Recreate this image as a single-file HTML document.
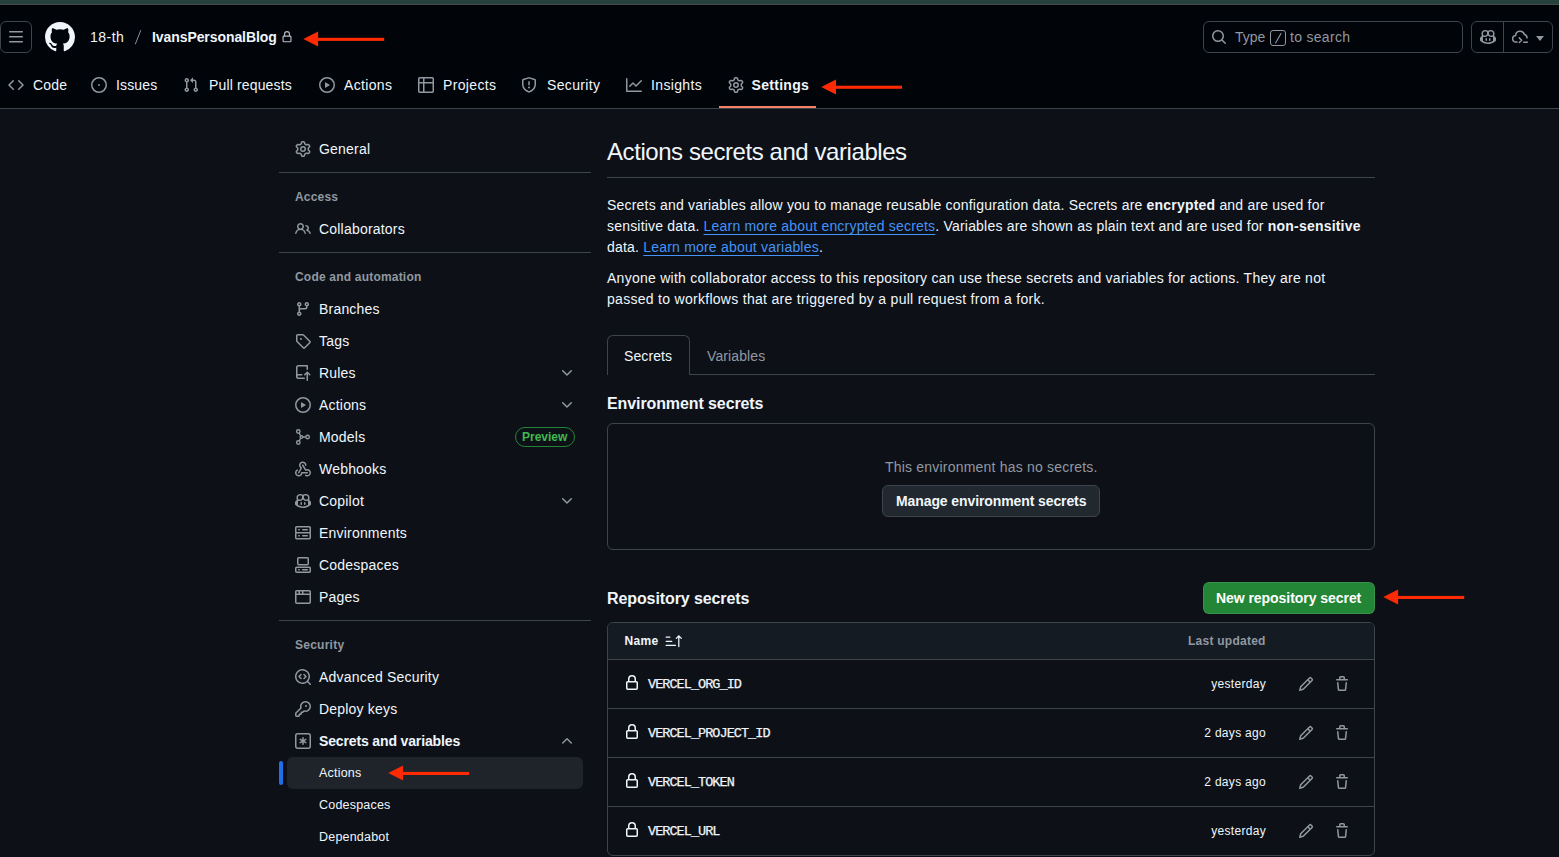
<!DOCTYPE html>
<html><head><meta charset="utf-8">
<style>
*{box-sizing:border-box;margin:0;padding:0}
html,body{width:1559px;height:857px;overflow:hidden;background:#0d1117;font-family:"Liberation Sans",sans-serif;color:#f0f6fc;font-size:14px}
.abs{position:absolute;display:block}
.t{position:absolute;white-space:nowrap}
.box{position:absolute}
.link{color:#4493f8;text-decoration:underline;text-underline-offset:3px}
.mono{font-family:"Liberation Mono",monospace}
b{font-weight:700}
</style></head><body>

<div class="box" style="left:0;top:0;width:1559px;height:4px;background:#27413c"></div><div class="box" style="left:0;top:4px;width:1559px;height:1px;background:#454b4b"></div>
<div class="box" style="left:0;top:5px;width:1559px;height:104px;background:#010409;border-bottom:1px solid #3d444d"></div>
<div class="box" style="left:0;top:21px;width:32px;height:32px;border:1px solid #3d444d;border-radius:6px"></div>
<svg class="abs" style="left:8px;top:29px" width="16" height="16" viewBox="0 0 16 16" fill="#9198a1"><path d="M1 2.75A.75.75 0 0 1 1.75 2h12.5a.75.75 0 0 1 0 1.5H1.75A.75.75 0 0 1 1 2.75Zm0 5A.75.75 0 0 1 1.75 7h12.5a.75.75 0 0 1 0 1.5H1.75A.75.75 0 0 1 1 7.75ZM1.75 12h12.5a.75.75 0 0 1 0 1.5H1.75a.75.75 0 0 1 0-1.5Z"/></svg>
<svg class="abs" style="left:45px;top:22px" width="30" height="30" viewBox="0 0 16 16" fill="#f0f6fc"><path d="M8 0c4.42 0 8 3.58 8 8a8.013 8.013 0 0 1-5.45 7.59c-.4.08-.55-.17-.55-.38 0-.27.01-1.130.01-2.2 0-.75-.25-1.23-.54-1.48 1.78-.2 3.650-.88 3.650-3.950 0-.88-.31-1.590-.82-2.150.08-.2.36-1.020-.08-2.120 0 0-.67-.22-2.200.82-.64-.18-1.320-.27-2-.27-.68 0-1.360.09-2 .27-1.530-1.030-2.200-.82-2.200-.82-.44 1.100-.16 1.920-.08 2.120-.51.56-.82 1.280-.82 2.150 0 3.060 1.860 3.750 3.640 3.950-.23.2-.44.55-.51 1.070-.46.21-1.610.55-2.330-.66-.15-.24-.6-.83-1.230-.82-.67.01-.27.38.01.53.34.19.73.9.82 1.130.16.45.68 1.310 2.690.94 0 .67.01 1.300.01 1.490 0 .21-.15.45-.55.38A7.995 7.995 0 0 1 0 8c0-4.420 3.580-8 8-8Z"/></svg>
<div class="t" style="left:90px;top:27px;font-size:14px;font-weight:400;color:#f0f6fc;letter-spacing:0.5px;line-height:20px;">18-th</div>
<svg class="abs" style="left:130px;top:25px" width="16" height="24" viewBox="130 25 16 24"><path d="M135.4 43.9 140.7 30.5" stroke="#8b929b" stroke-width="1" stroke-linecap="round"/></svg>
<div class="t" style="left:152px;top:27px;font-size:14px;font-weight:700;color:#f0f6fc;letter-spacing:-0.08px;line-height:20px;">IvansPersonalBlog</div>
<svg class="abs" style="left:281px;top:30.5px" width="12" height="12" viewBox="0 0 16 16" fill="#b9bfc9"><path d="M4 4a4 4 0 0 1 8 0v2h.25c.966 0 1.75.784 1.75 1.75v5.5A1.75 1.75 0 0 1 12.25 15h-8.5A1.75 1.75 0 0 1 2 13.25v-5.5C2 6.784 2.784 6 3.75 6H4Zm8.25 3.5h-8.5a.25.25 0 0 0-.25.25v5.5c0 .138.112.25.25.25h8.5a.25.25 0 0 0 .25-.25v-5.5a.25.25 0 0 0-.25-.25ZM10.5 6V4a2.5 2.5 0 1 0-5 0v2Z"/></svg>

<div class="box" style="left:1203px;top:21px;width:260px;height:32px;border:1px solid #3d444d;border-radius:6px"></div>
<svg class="abs" style="left:1211px;top:29px" width="16" height="16" viewBox="0 0 16 16" fill="#9198a1"><path d="M10.68 11.74a6 6 0 0 1-7.922-8.982 6 6 0 0 1 8.982 7.922l3.04 3.04a.749.749 0 0 1-.326 1.275.749.749 0 0 1-.734-.215ZM11.5 7a4.499 4.499 0 1 0-8.997 0A4.499 4.499 0 0 0 11.5 7Z"/></svg>
<div class="t" style="left:1235px;top:27px;font-size:14px;font-weight:400;color:#9198a1;letter-spacing:0px;line-height:20px;">Type</div>
<div class="box" style="left:1270px;top:30px;width:16px;height:16px;border:1px solid #9198a1;border-radius:3px"></div>
<svg class="abs" style="left:1270px;top:30px" width="16" height="16" viewBox="1270 30 16 16"><path d="M1275.6 43 1281 33.4" stroke="#9198a1" stroke-width="1.1" stroke-linecap="round"/></svg>
<div class="t" style="left:1290px;top:27px;font-size:14px;font-weight:400;color:#9198a1;letter-spacing:0.3px;line-height:20px;">to search</div>
<div class="box" style="left:1471px;top:21px;width:82px;height:32px;border:1px solid #3d444d;border-radius:6px"></div>
<div class="box" style="left:1503px;top:21px;width:1px;height:32px;background:#3d444d"></div>
<svg class="abs" style="left:1480px;top:29px" width="16" height="16" viewBox="0 0 16 16" fill="#9198a1"><path d="M7.998 15.035c-4.562 0-7.873-2.914-7.998-3.749V9.338c.085-.628.677-1.686 1.588-2.065.013-.07.024-.143.036-.218.029-.183.06-.384.126-.612-.201-.508-.254-1.084-.254-1.656 0-.87.128-1.769.693-2.484.579-.733 1.494-1.124 2.724-1.261 1.206-.134 2.262.034 2.944.765.05.053.096.108.139.165.044-.057.094-.112.143-.165.682-.731 1.738-.899 2.944-.765 1.23.137 2.145.528 2.724 1.261.566.715.693 1.614.693 2.484 0 .572-.053 1.148-.254 1.656.066.228.098.429.126.612.012.076.024.148.037.218.924.385 1.522 1.471 1.591 2.095v1.872c0 .766-3.351 3.795-8.002 3.795Zm0-1.485c2.28 0 4.584-1.11 5.002-1.433V7.862l-.023-.116c-.49.21-1.075.291-1.727.291-1.146 0-2.059-.327-2.71-.991A3.222 3.222 0 0 1 8 6.303a3.24 3.24 0 0 1-.544.743c-.65.664-1.563.991-2.71.991-.652 0-1.236-.081-1.727-.291l-.023.116v4.255c.419.323 2.722 1.433 5.002 1.433ZM6.762 2.83c-.193-.206-.637-.413-1.682-.297-1.019.113-1.479.404-1.713.7-.247.312-.369.789-.369 1.554 0 .793.129 1.171.308 1.371.162.181.519.379 1.442.379.853 0 1.339-.235 1.638-.54.315-.322.527-.827.617-1.553.117-.935-.037-1.395-.241-1.614Zm4.155-.297c-1.044-.116-1.488.091-1.681.297-.204.219-.359.679-.242 1.614.091.726.303 1.231.618 1.553.299.305.784.54 1.638.54.922 0 1.28-.198 1.442-.379.179-.2.308-.578.308-1.371 0-.765-.123-1.242-.37-1.554-.233-.296-.693-.587-1.713-.7Z"/><path d="M6.25 9.037a.75.75 0 0 1 .75.75v1.501a.75.75 0 0 1-1.5 0V9.787a.75.75 0 0 1 .75-.75Zm4.25.75v1.501a.75.75 0 0 1-1.5 0V9.787a.75.75 0 0 1 1.5 0Z"/></svg>
<svg class="abs" style="left:1512px;top:29px" width="18" height="16" viewBox="0 0 18 16" fill="none" stroke="#9198a1" stroke-width="1.5" stroke-linecap="round" stroke-linejoin="round"><path d="M5 13H4a3.2 3.2 0 0 1-.4-6.4A4.5 4.5 0 0 1 12.4 5.5 3.5 3.5 0 0 1 15 9"/><path d="M7.3 8.9l2.3 2.3-2.3 2.3"/><path d="M11.8 13.2h3.6"/></svg>
<svg class="abs" style="left:1536px;top:36px" width="8" height="5" viewBox="0 0 8 5" fill="#9198a1"><path d="M0 0h8L4 5z"/></svg>
<svg class="abs" style="left:8px;top:77px" width="16" height="16" viewBox="0 0 16 16" fill="#9198a1"><path d="m11.28 3.22 4.25 4.25a.75.75 0 0 1 0 1.06l-4.25 4.25a.749.749 0 0 1-1.275-.326.749.749 0 0 1 .215-.734L13.94 8l-3.72-3.72a.749.749 0 0 1 .326-1.275.749.749 0 0 1 .734.215Zm-6.56 0a.751.751 0 0 1 1.042.018.751.751 0 0 1 .018 1.042L2.06 8l3.72 3.72a.749.749 0 0 1-.326 1.275.749.749 0 0 1-.734-.215L.47 8.53a.75.75 0 0 1 0-1.06Z"/></svg>
<div class="t" style="left:33px;top:75px;font-size:14px;font-weight:400;color:#f0f6fc;letter-spacing:0.15px;line-height:20px;">Code</div>
<svg class="abs" style="left:91px;top:77px" width="16" height="16" viewBox="0 0 16 16" fill="#9198a1"><circle cx="8" cy="8" r="0.9"/><path d="M8 0a8 8 0 1 1 0 16A8 8 0 0 1 8 0ZM1.5 8a6.5 6.5 0 1 0 13 0 6.5 6.5 0 0 0-13 0Z"/></svg>
<div class="t" style="left:116px;top:75px;font-size:14px;font-weight:400;color:#f0f6fc;letter-spacing:0.15px;line-height:20px;">Issues</div>
<svg class="abs" style="left:183px;top:77px" width="16" height="16" viewBox="0 0 16 16" fill="#9198a1"><path d="M1.5 3.25a2.25 2.25 0 1 1 3 2.122v5.256a2.251 2.251 0 1 1-1.5 0V5.372A2.25 2.25 0 0 1 1.5 3.25Zm5.677-.177L9.573.677A.25.25 0 0 1 10 .854V2.5h1A2.5 2.5 0 0 1 13.5 5v5.628a2.251 2.251 0 1 1-1.5 0V5a1 1 0 0 0-1-1h-1v1.646a.25.25 0 0 1-.427.177L7.177 3.427a.25.25 0 0 1 0-.354ZM3.75 2.5a.75.75 0 1 0 0 1.5.75.75 0 0 0 0-1.5Zm0 9.5a.75.75 0 1 0 0 1.5.75.75 0 0 0 0-1.5Zm8.25.75a.75.75 0 1 0 1.5 0 .75.75 0 0 0-1.5 0Z"/></svg>
<div class="t" style="left:209px;top:75px;font-size:14px;font-weight:400;color:#f0f6fc;letter-spacing:0.15px;line-height:20px;">Pull requests</div>
<svg class="abs" style="left:319px;top:77px" width="16" height="16" viewBox="0 0 16 16" fill="#9198a1"><path d="M8 0a8 8 0 1 1 0 16A8 8 0 0 1 8 0ZM1.5 8a6.5 6.5 0 1 0 13 0 6.5 6.5 0 0 0-13 0Zm4.879-2.773 4.264 2.559a.25.25 0 0 1 0 .428l-4.264 2.559A.25.25 0 0 1 6 10.559V5.442a.25.25 0 0 1 .379-.215Z"/></svg>
<div class="t" style="left:344px;top:75px;font-size:14px;font-weight:400;color:#f0f6fc;letter-spacing:0.35px;line-height:20px;">Actions</div>
<svg class="abs" style="left:418px;top:77px" width="16" height="16" viewBox="0 0 16 16" fill="#9198a1"><path d="M0 1.75C0 .784.784 0 1.75 0h12.5C15.216 0 16 .784 16 1.75v12.5A1.75 1.75 0 0 1 14.25 16H1.75A1.75 1.75 0 0 1 0 14.25ZM6.5 6.5v8h7.75a.25.25 0 0 0 .25-.25V6.5Zm8-1.5V1.75a.25.25 0 0 0-.25-.25H6.5V5Zm-13 1.5v7.75c0 .138.112.25.25.25H5v-8ZM5 5V1.5H1.75a.25.25 0 0 0-.25.25V5Z"/></svg>
<div class="t" style="left:443px;top:75px;font-size:14px;font-weight:400;color:#f0f6fc;letter-spacing:0.35px;line-height:20px;">Projects</div>
<svg class="abs" style="left:521px;top:77px" width="16" height="16" viewBox="0 0 16 16" fill="#9198a1"><path d="M7.467.133a1.748 1.748 0 0 1 1.066 0l5.25 1.68A1.75 1.75 0 0 1 15 3.48V7c0 1.566-.32 3.182-1.303 4.682-.983 1.498-2.585 2.813-5.032 3.855a1.697 1.697 0 0 1-1.33 0c-2.447-1.042-4.049-2.357-5.032-3.855C1.32 10.182 1 8.566 1 7V3.48a1.755 1.755 0 0 1 1.217-1.667Zm.61 1.429a.25.25 0 0 0-.153 0l-5.25 1.68a.25.25 0 0 0-.174.238V7c0 1.358.275 2.666 1.057 3.86.784 1.194 2.121 2.34 4.366 3.297a.196.196 0 0 0 .154 0c2.245-.956 3.582-2.104 4.366-3.298C13.225 9.666 13.5 8.36 13.5 7V3.48a.251.251 0 0 0-.174-.237l-5.25-1.68ZM8.75 4.750v3a.75.75 0 0 1-1.5 0v-3a.75.75 0 0 1 1.5 0ZM9 10.5a1 1 0 1 1-2 0 1 1 0 0 1 2 0Z"/></svg>
<div class="t" style="left:547px;top:75px;font-size:14px;font-weight:400;color:#f0f6fc;letter-spacing:0.35px;line-height:20px;">Security</div>
<svg class="abs" style="left:626px;top:77px" width="16" height="16" viewBox="0 0 16 16" fill="#9198a1"><path d="M1.5 1.75V13.5h13.75a.75.75 0 0 1 0 1.5H.75a.75.75 0 0 1-.75-.75V1.75a.75.75 0 0 1 1.5 0Zm14.28 2.53-5.25 5.25a.75.75 0 0 1-1.06 0L7 7.06 4.28 9.78a.751.751 0 0 1-1.042-.018.751.751 0 0 1-.018-1.042l3.25-3.25a.75.75 0 0 1 1.06 0L10 7.94l4.72-4.72a.751.751 0 0 1 1.042.018.751.751 0 0 1 .018 1.042Z"/></svg>
<div class="t" style="left:651px;top:75px;font-size:14px;font-weight:400;color:#f0f6fc;letter-spacing:0.35px;line-height:20px;">Insights</div>
<svg class="abs" style="left:728px;top:77px" width="16" height="16" viewBox="0 0 16 16" fill="#9198a1"><path d="M8 0a8.2 8.2 0 0 1 .701.031C9.444.095 9.99.645 10.16 1.29l.288 1.107c.018.066.079.158.212.224.231.114.454.243.668.386.123.082.233.09.299.071l1.103-.303c.644-.176 1.392.021 1.82.63.27.385.506.792.704 1.218.315.675.111 1.422-.364 1.891l-.814.806c-.049.048-.098.147-.088.294.016.257.016.515 0 .772-.01.147.038.246.088.294l.814.806c.475.469.679 1.216.364 1.891a7.977 7.977 0 0 1-.704 1.217c-.428.61-1.176.807-1.82.63l-1.102-.302c-.067-.019-.177-.011-.3.071a5.909 5.909 0 0 1-.668.386c-.133.066-.194.158-.211.224l-.29 1.106c-.168.646-.715 1.196-1.458 1.26a8.006 8.006 0 0 1-1.402 0c-.743-.064-1.289-.614-1.458-1.26l-.289-1.106c-.018-.066-.079-.158-.212-.224a5.738 5.738 0 0 1-.668-.386c-.123-.082-.233-.09-.299-.071l-1.103.303c-.644.176-1.392-.021-1.82-.63a8.12 8.120 0 0 1-.704-1.218c-.315-.675-.111-1.422.363-1.891l.815-.806c.05-.048.098-.147.088-.294a6.214 6.214 0 0 1 0-.772c.01-.147-.038-.246-.088-.294l-.815-.806C.635 6.045.431 5.298.746 4.623a7.920 7.920 0 0 1 .704-1.217c.428-.61 1.176-.807 1.820-.63l1.102.302c.067.019.177.011.3-.071.214-.143.437-.272.668-.386.133-.066.194-.158.211-.224l.29-1.106C6.009.645 6.556.095 7.299.03 7.53.01 7.764 0 8 0Zm-.571 1.525c-.036.003-.108.036-.137.146l-.289 1.105c-.147.561-.549.967-.998 1.189-.173.086-.34.183-.5.29-.417.278-.97.423-1.529.27l-1.103-.303c-.109-.03-.175.016-.195.045-.22.312-.412.644-.573.99-.014.031-.021.11.059.19l.815.806c.411.406.562.957.53 1.456a4.709 4.709 0 0 0 0 .582c.032.499-.119 1.05-.53 1.456l-.815.806c-.081.08-.073.159-.059.19.162.346.353.677.573.989.02.03.085.076.195.046l1.102-.303c.56-.153 1.113-.008 1.53.27.161.107.328.204.501.29.447.222.85.629.997 1.189l.289 1.105c.029.109.101.143.137.146a6.6 6.6 0 0 0 1.142 0c.036-.003.108-.036.137-.146l.289-1.105c.147-.561.549-.967.998-1.189.173-.086.34-.183.5-.29.417-.278.97-.423 1.529-.27l1.103.303c.109.029.175-.016.195-.045.22-.313.411-.644.573-.99.014-.031.021-.11-.059-.19l-.815-.806c-.411-.406-.562-.957-.53-1.456a4.709 4.709 0 0 0 0-.582c-.032-.499.119-1.05.53-1.456l.815-.806c.081-.08.073-.159.059-.19a6.464 6.464 0 0 0-.573-.989c-.02-.03-.085-.076-.195-.046l-1.102.303c-.56.153-1.113.008-1.53-.27a4.44 4.44 0 0 0-.501-.29c-.447-.222-.85-.629-.997-1.189l-.289-1.105c-.029-.11-.101-.143-.137-.146a6.6 6.6 0 0 0-1.142 0ZM11 8a3 3 0 1 1-6 0 3 3 0 0 1 6 0ZM9.5 8a1.5 1.5 0 1 0-3.001.001A1.5 1.5 0 0 0 9.5 8Z"/></svg>
<div class="t" style="left:751.5px;top:75px;font-size:14px;font-weight:700;color:#f0f6fc;letter-spacing:0.3px;line-height:20px;">Settings</div>
<div class="box" style="left:719px;top:106px;width:97px;height:2px;background:#f78166"></div>

<svg class="abs" style="left:295px;top:141px" width="16" height="16" viewBox="0 0 16 16" fill="#9198a1"><path d="M8 0a8.2 8.2 0 0 1 .701.031C9.444.095 9.99.645 10.16 1.29l.288 1.107c.018.066.079.158.212.224.231.114.454.243.668.386.123.082.233.09.299.071l1.103-.303c.644-.176 1.392.021 1.82.63.27.385.506.792.704 1.218.315.675.111 1.422-.364 1.891l-.814.806c-.049.048-.098.147-.088.294.016.257.016.515 0 .772-.01.147.038.246.088.294l.814.806c.475.469.679 1.216.364 1.891a7.977 7.977 0 0 1-.704 1.217c-.428.61-1.176.807-1.82.63l-1.102-.302c-.067-.019-.177-.011-.3.071a5.909 5.909 0 0 1-.668.386c-.133.066-.194.158-.211.224l-.29 1.106c-.168.646-.715 1.196-1.458 1.26a8.006 8.006 0 0 1-1.402 0c-.743-.064-1.289-.614-1.458-1.26l-.289-1.106c-.018-.066-.079-.158-.212-.224a5.738 5.738 0 0 1-.668-.386c-.123-.082-.233-.09-.299-.071l-1.103.303c-.644.176-1.392-.021-1.82-.63a8.12 8.120 0 0 1-.704-1.218c-.315-.675-.111-1.422.363-1.891l.815-.806c.05-.048.098-.147.088-.294a6.214 6.214 0 0 1 0-.772c.01-.147-.038-.246-.088-.294l-.815-.806C.635 6.045.431 5.298.746 4.623a7.920 7.920 0 0 1 .704-1.217c.428-.61 1.176-.807 1.820-.63l1.102.302c.067.019.177.011.3-.071.214-.143.437-.272.668-.386.133-.066.194-.158.211-.224l.29-1.106C6.009.645 6.556.095 7.299.03 7.53.01 7.764 0 8 0Zm-.571 1.525c-.036.003-.108.036-.137.146l-.289 1.105c-.147.561-.549.967-.998 1.189-.173.086-.34.183-.5.29-.417.278-.97.423-1.529.27l-1.103-.303c-.109-.03-.175.016-.195.045-.22.312-.412.644-.573.99-.014.031-.021.11.059.19l.815.806c.411.406.562.957.53 1.456a4.709 4.709 0 0 0 0 .582c.032.499-.119 1.05-.53 1.456l-.815.806c-.081.08-.073.159-.059.19.162.346.353.677.573.989.02.03.085.076.195.046l1.102-.303c.56-.153 1.113-.008 1.53.27.161.107.328.204.501.29.447.222.85.629.997 1.189l.289 1.105c.029.109.101.143.137.146a6.6 6.6 0 0 0 1.142 0c.036-.003.108-.036.137-.146l.289-1.105c.147-.561.549-.967.998-1.189.173-.086.34-.183.5-.29.417-.278.97-.423 1.529-.27l1.103.303c.109.029.175-.016.195-.045.22-.313.411-.644.573-.99.014-.031.021-.11-.059-.19l-.815-.806c-.411-.406-.562-.957-.53-1.456a4.709 4.709 0 0 0 0-.582c-.032-.499.119-1.05.53-1.456l.815-.806c.081-.08.073-.159.059-.19a6.464 6.464 0 0 0-.573-.989c-.02-.03-.085-.076-.195-.046l-1.102.303c-.56.153-1.113.008-1.53-.27a4.44 4.44 0 0 0-.501-.29c-.447-.222-.85-.629-.997-1.189l-.289-1.105c-.029-.11-.101-.143-.137-.146a6.6 6.6 0 0 0-1.142 0ZM11 8a3 3 0 1 1-6 0 3 3 0 0 1 6 0ZM9.5 8a1.5 1.5 0 1 0-3.001.001A1.5 1.5 0 0 0 9.5 8Z"/></svg><div class="t" style="left:319px;top:139px;font-size:14px;font-weight:400;color:#f0f6fc;letter-spacing:0.2px;line-height:20px;">General</div>
<div class="box" style="left:279px;top:172px;width:312px;height:1px;background:#3d444d"></div>
<div class="t" style="left:295px;top:187px;font-size:12px;font-weight:700;color:#9198a1;letter-spacing:0.2px;line-height:20px;">Access</div>
<svg class="abs" style="left:295px;top:221px" width="16" height="16" viewBox="0 0 16 16" fill="#9198a1"><path d="M2 5.5a3.5 3.5 0 1 1 5.898 2.549 5.508 5.508 0 0 1 3.034 4.084.75.75 0 1 1-1.482.235 4 4 0 0 0-7.9 0 .75.75 0 0 1-1.482-.236A5.507 5.507 0 0 1 3.102 8.05 3.493 3.493 0 0 1 2 5.5ZM11 4a3.001 3.001 0 0 1 2.22 5.018 5.01 5.01 0 0 1 2.56 3.012.749.749 0 0 1-.885.954.752.752 0 0 1-.549-.514 3.507 3.507 0 0 0-2.522-2.372.75.75 0 0 1-.574-.73v-.352a.75.75 0 0 1 .416-.672A1.5 1.5 0 0 0 11 5.5.75.75 0 0 1 11 4Zm-5.5-.5a2 2 0 1 0-.001 3.999A2 2 0 0 0 5.5 3.5Z"/></svg><div class="t" style="left:319px;top:219px;font-size:14px;font-weight:400;color:#f0f6fc;letter-spacing:0.2px;line-height:20px;">Collaborators</div>
<div class="box" style="left:279px;top:252px;width:312px;height:1px;background:#3d444d"></div>
<div class="t" style="left:295px;top:267px;font-size:12px;font-weight:700;color:#9198a1;letter-spacing:0.2px;line-height:20px;">Code and automation</div>
<svg class="abs" style="left:295px;top:301px" width="16" height="16" viewBox="0 0 16 16" fill="#9198a1"><path d="M9.5 3.25a2.25 2.25 0 1 1 3 2.122V6A2.5 2.5 0 0 1 10 8.5H6a1 1 0 0 0-1 1v1.128a2.251 2.251 0 1 1-1.5 0V5.372a2.25 2.25 0 1 1 1.5 0v1.836A2.493 2.493 0 0 1 6 7h4a1 1 0 0 0 1-1v-.628A2.25 2.25 0 0 1 9.5 3.25Zm-6 0a.75.75 0 1 0 1.5 0 .75.75 0 0 0-1.5 0Zm8.25-.75a.75.75 0 1 0 0 1.5.75.75 0 0 0 0-1.5ZM4.25 12a.75.75 0 1 0 0 1.5.75.75 0 0 0 0-1.5Z"/></svg><div class="t" style="left:319px;top:299px;font-size:14px;font-weight:400;color:#f0f6fc;letter-spacing:0.2px;line-height:20px;">Branches</div>
<svg class="abs" style="left:295px;top:333px" width="16" height="16" viewBox="0 0 16 16" fill="#9198a1"><path d="M1 7.775V2.75C1 1.784 1.784 1 2.75 1h5.025c.464 0 .91.184 1.238.513l6.25 6.25a1.75 1.75 0 0 1 0 2.474l-5.026 5.026a1.75 1.75 0 0 1-2.474 0l-6.25-6.25A1.752 1.752 0 0 1 1 7.775Zm1.5 0c0 .066.026.13.073.177l6.25 6.25a.25.25 0 0 0 .354 0l5.025-5.025a.25.25 0 0 0 0-.354l-6.25-6.25a.25.25 0 0 0-.177-.073H2.75a.25.25 0 0 0-.25.25ZM6 5a1 1 0 1 1 0 2 1 1 0 0 1 0-2Z"/></svg><div class="t" style="left:319px;top:331px;font-size:14px;font-weight:400;color:#f0f6fc;letter-spacing:0.2px;line-height:20px;">Tags</div>
<svg class="abs" style="left:295px;top:365px" width="16" height="16" viewBox="0 0 16 16" fill="#9198a1"><path d="M1 2.5A2.5 2.5 0 0 1 3.5 0h8.75a.75.75 0 0 1 .75.75v3.5a.75.75 0 0 1-1.5 0V1.5h-8a1 1 0 0 0-1 1v6.708A2.493 2.493 0 0 1 3.5 9h3.25a.75.75 0 0 1 0 1.5H3.5a1 1 0 0 0 0 2h5.75a.75.75 0 0 1 0 1.5H3.5A2.5 2.5 0 0 1 1 11.5Zm13.23 7.79h-.001l-1.224-1.224v6.184a.75.75 0 0 1-1.5 0V9.066L10.28 10.29a.75.75 0 0 1-1.06-1.061l2.505-2.504a.75.75 0 0 1 1.06 0L15.29 9.23a.751.751 0 0 1-.018 1.042.751.751 0 0 1-1.042.018Z"/></svg><div class="t" style="left:319px;top:363px;font-size:14px;font-weight:400;color:#f0f6fc;letter-spacing:0.2px;line-height:20px;">Rules</div><svg class="abs" style="left:559px;top:365px" width="16" height="16" viewBox="0 0 16 16" fill="#9198a1"><path d="M12.78 5.22a.749.749 0 0 1 0 1.06l-4.25 4.25a.749.749 0 0 1-1.06 0L3.22 6.28a.749.749 0 0 1 .326-1.275.749.749 0 0 1 .734.215L8 8.94l3.72-3.72a.749.749 0 0 1 1.06 0Z"/></svg>
<svg class="abs" style="left:295px;top:397px" width="16" height="16" viewBox="0 0 16 16" fill="#9198a1"><path d="M8 0a8 8 0 1 1 0 16A8 8 0 0 1 8 0ZM1.5 8a6.5 6.5 0 1 0 13 0 6.5 6.5 0 0 0-13 0Zm4.879-2.773 4.264 2.559a.25.25 0 0 1 0 .428l-4.264 2.559A.25.25 0 0 1 6 10.559V5.442a.25.25 0 0 1 .379-.215Z"/></svg><div class="t" style="left:319px;top:395px;font-size:14px;font-weight:400;color:#f0f6fc;letter-spacing:0.2px;line-height:20px;">Actions</div><svg class="abs" style="left:559px;top:397px" width="16" height="16" viewBox="0 0 16 16" fill="#9198a1"><path d="M12.78 5.22a.749.749 0 0 1 0 1.06l-4.25 4.25a.749.749 0 0 1-1.06 0L3.22 6.28a.749.749 0 0 1 .326-1.275.749.749 0 0 1 .734.215L8 8.94l3.72-3.72a.749.749 0 0 1 1.06 0Z"/></svg>
<svg class="abs" style="left:295px;top:429px" width="16" height="16" viewBox="0 0 16 16" fill="#9198a1"><g fill="none" stroke="#9198a1" stroke-width="1.35"><circle cx="3.3" cy="2.5" r="1.75"/><circle cx="3.3" cy="13.5" r="1.75"/><circle cx="12.6" cy="8" r="1.75"/><circle cx="6.4" cy="8" r="1.3"/><path d="M4.2 4.1 5.6 6.7M4.2 11.9 5.6 9.3M7.7 8h3.1"/></g></svg><div class="t" style="left:319px;top:427px;font-size:14px;font-weight:400;color:#f0f6fc;letter-spacing:0.2px;line-height:20px;">Models</div>
<svg class="abs" style="left:295px;top:461px" width="16" height="16" viewBox="0 0 16 16" fill="#9198a1"><path d="M5.5 4.25a2.25 2.25 0 0 1 4.5 0 .75.75 0 0 0 1.5 0 3.75 3.75 0 1 0-6.14 2.889l-2.272 4.258a.75.75 0 0 0 1.324.706L7 7.25a.75.75 0 0 0-.309-1.01A2.25 2.25 0 0 1 5.5 4.25Z"/><path d="M7.364 3.607a.75.75 0 0 1 1.03.257l2.608 4.349a3.75 3.75 0 1 1-.628 6.785.75.75 0 0 1 .752-1.299 2.25 2.25 0 1 0-.033-3.88.75.75 0 0 1-1.03-.256L7.107 4.636a.75.75 0 0 1 .257-1.03Z"/><path d="M2.9 8.776A.75.75 0 0 1 2.625 9.8 2.25 2.25 0 1 0 6 11.75a.75.75 0 0 1 .75-.751h5.5a.75.75 0 0 1 0 1.5H7.425a3.751 3.751 0 1 1-5.55-3.998.75.75 0 0 1 1.024.274Z"/></svg><div class="t" style="left:319px;top:459px;font-size:14px;font-weight:400;color:#f0f6fc;letter-spacing:0.2px;line-height:20px;">Webhooks</div>
<svg class="abs" style="left:295px;top:493px" width="16" height="16" viewBox="0 0 16 16" fill="#9198a1"><path d="M7.998 15.035c-4.562 0-7.873-2.914-7.998-3.749V9.338c.085-.628.677-1.686 1.588-2.065.013-.07.024-.143.036-.218.029-.183.06-.384.126-.612-.201-.508-.254-1.084-.254-1.656 0-.87.128-1.769.693-2.484.579-.733 1.494-1.124 2.724-1.261 1.206-.134 2.262.034 2.944.765.05.053.096.108.139.165.044-.057.094-.112.143-.165.682-.731 1.738-.899 2.944-.765 1.23.137 2.145.528 2.724 1.261.566.715.693 1.614.693 2.484 0 .572-.053 1.148-.254 1.656.066.228.098.429.126.612.012.076.024.148.037.218.924.385 1.522 1.471 1.591 2.095v1.872c0 .766-3.351 3.795-8.002 3.795Zm0-1.485c2.28 0 4.584-1.11 5.002-1.433V7.862l-.023-.116c-.49.21-1.075.291-1.727.291-1.146 0-2.059-.327-2.71-.991A3.222 3.222 0 0 1 8 6.303a3.24 3.24 0 0 1-.544.743c-.65.664-1.563.991-2.71.991-.652 0-1.236-.081-1.727-.291l-.023.116v4.255c.419.323 2.722 1.433 5.002 1.433ZM6.762 2.83c-.193-.206-.637-.413-1.682-.297-1.019.113-1.479.404-1.713.7-.247.312-.369.789-.369 1.554 0 .793.129 1.171.308 1.371.162.181.519.379 1.442.379.853 0 1.339-.235 1.638-.54.315-.322.527-.827.617-1.553.117-.935-.037-1.395-.241-1.614Zm4.155-.297c-1.044-.116-1.488.091-1.681.297-.204.219-.359.679-.242 1.614.091.726.303 1.231.618 1.553.299.305.784.54 1.638.54.922 0 1.28-.198 1.442-.379.179-.2.308-.578.308-1.371 0-.765-.123-1.242-.37-1.554-.233-.296-.693-.587-1.713-.7Z"/><path d="M6.25 9.037a.75.75 0 0 1 .75.75v1.501a.75.75 0 0 1-1.5 0V9.787a.75.75 0 0 1 .75-.75Zm4.25.75v1.501a.75.75 0 0 1-1.5 0V9.787a.75.75 0 0 1 1.5 0Z"/></svg><div class="t" style="left:319px;top:491px;font-size:14px;font-weight:400;color:#f0f6fc;letter-spacing:0.2px;line-height:20px;">Copilot</div><svg class="abs" style="left:559px;top:493px" width="16" height="16" viewBox="0 0 16 16" fill="#9198a1"><path d="M12.78 5.22a.749.749 0 0 1 0 1.06l-4.25 4.25a.749.749 0 0 1-1.06 0L3.22 6.28a.749.749 0 0 1 .326-1.275.749.749 0 0 1 .734.215L8 8.94l3.72-3.72a.749.749 0 0 1 1.06 0Z"/></svg>
<svg class="abs" style="left:295px;top:525px" width="16" height="16" viewBox="0 0 16 16" fill="#9198a1"><path d="M1.75 1h12.5c.966 0 1.75.784 1.75 1.75v4c0 .372-.116.717-.314 1 .198.283.314.628.314 1v4a1.75 1.75 0 0 1-1.75 1.750H1.75A1.75 1.75 0 0 1 0 12.75v-4c0-.358.109-.707.314-1a1.739 1.739 0 0 1-.314-1v-4C0 1.784.784 1 1.75 1ZM1.5 2.75v4c0 .138.112.25.25.25h12.5a.25.25 0 0 0 .25-.25v-4a.25.25 0 0 0-.25-.25H1.75a.25.25 0 0 0-.25.25Zm.25 5.75a.25.25 0 0 0-.25.25v4c0 .138.112.25.25.25h12.5a.25.25 0 0 0 .25-.25v-4a.25.25 0 0 0-.25-.25ZM7 4.75A.75.75 0 0 1 7.75 4h4.5a.75.75 0 0 1 0 1.5h-4.5A.75.75 0 0 1 7 4.75ZM7.75 10h4.5a.75.75 0 0 1 0 1.5h-4.5a.75.75 0 0 1 0-1.5ZM3 4.75A.75.75 0 0 1 3.75 4h.5a.75.75 0 0 1 0 1.5h-.5A.75.75 0 0 1 3 4.75ZM3.75 10h.5a.75.75 0 0 1 0 1.5h-.5a.75.75 0 0 1 0-1.5Z"/></svg><div class="t" style="left:319px;top:523px;font-size:14px;font-weight:400;color:#f0f6fc;letter-spacing:0.2px;line-height:20px;">Environments</div>
<svg class="abs" style="left:295px;top:557px" width="16" height="16" viewBox="0 0 16 16" fill="#9198a1"><path d="M0 11.25c0-.966.784-1.75 1.75-1.75h12.5c.966 0 1.75.784 1.75 1.75v3A1.75 1.75 0 0 1 14.25 16H1.75A1.75 1.75 0 0 1 0 14.25Zm2-9.5C2 .784 2.784 0 3.75 0h8.5C13.216 0 14 .784 14 1.75v5a1.75 1.75 0 0 1-1.75 1.75h-8.5A1.75 1.75 0 0 1 2 6.75Zm1.75-.25a.25.25 0 0 0-.25.25v5c0 .138.112.25.25.25h8.5a.25.25 0 0 0 .25-.25v-5a.25.25 0 0 0-.25-.25Zm-2 9.5a.25.25 0 0 0-.25.25v3c0 .138.112.25.25.25h12.5a.25.25 0 0 0 .25-.25v-3a.25.25 0 0 0-.25-.25Z"/><path d="M7 12.75a.75.75 0 0 1 .75-.75h4.5a.75.75 0 0 1 0 1.5h-4.5a.75.75 0 0 1-.75-.75Zm-4 0a.75.75 0 0 1 .75-.75h.5a.75.75 0 0 1 0 1.5h-.5a.75.75 0 0 1-.75-.75Z"/></svg><div class="t" style="left:319px;top:555px;font-size:14px;font-weight:400;color:#f0f6fc;letter-spacing:0.2px;line-height:20px;">Codespaces</div>
<svg class="abs" style="left:295px;top:589px" width="16" height="16" viewBox="0 0 16 16" fill="#9198a1"><path d="M0 2.75C0 1.784.784 1 1.75 1h12.5c.966 0 1.75.784 1.75 1.75v10.5A1.75 1.75 0 0 1 14.25 15H1.75A1.75 1.75 0 0 1 0 13.25ZM14.5 6h-13v7.25c0 .138.112.25.25.25h12.5a.25.25 0 0 0 .25-.25Zm-6-3.5v2h6V2.75a.25.25 0 0 0-.25-.25ZM5 2.5v2h2v-2Zm-3.25 0a.25.25 0 0 0-.25.25V4.5h2v-2Z"/></svg><div class="t" style="left:319px;top:587px;font-size:14px;font-weight:400;color:#f0f6fc;letter-spacing:0.2px;line-height:20px;">Pages</div>
<div class="box" style="left:515px;top:427px;width:60px;height:20px;border:1px solid #238636;border-radius:10px"></div>
<div class="t" style="left:522px;top:427px;font-size:12px;font-weight:700;color:#3fb950;letter-spacing:0px;line-height:20px;">Preview</div>
<div class="box" style="left:279px;top:620px;width:312px;height:1px;background:#3d444d"></div>
<div class="t" style="left:295px;top:635px;font-size:12px;font-weight:700;color:#9198a1;letter-spacing:0.25px;line-height:20px;">Security</div>
<svg class="abs" style="left:295px;top:669px" width="16" height="16" viewBox="0 0 16 16" fill="#9198a1"><path d="M8.47 4.97a.75.75 0 0 0 0 1.06L9.94 7.5 8.47 8.97a.75.75 0 1 0 1.06 1.06l2-2a.75.75 0 0 0 0-1.06l-2-2a.75.75 0 0 0-1.06 0ZM6.53 6.03a.75.75 0 0 0-1.06-1.06l-2 2a.75.75 0 0 0 0 1.06l2 2a.75.75 0 1 0 1.06-1.06L5.06 7.5l1.47-1.47Z"/><path d="M12.246 13.307a7.501 7.501 0 1 1 1.06-1.06l2.474 2.473a.749.749 0 0 1-.326 1.275.749.749 0 0 1-.734-.215ZM1.5 7.5a6.002 6.002 0 0 0 3.608 5.504 6.002 6.002 0 0 0 6.486-1.117.748.748 0 0 1 .292-.293A6 6 0 1 0 1.5 7.5Z"/></svg><div class="t" style="left:319px;top:667px;font-size:14px;font-weight:400;color:#f0f6fc;letter-spacing:0.2px;line-height:20px;">Advanced Security</div>
<svg class="abs" style="left:295px;top:701px" width="16" height="16" viewBox="0 0 16 16" fill="#9198a1"><path d="M10.5 0a5.499 5.499 0 1 1-1.288 10.848l-.932.932a.749.749 0 0 1-.53.22H7v.75a.749.749 0 0 1-.22.53l-.5.5a.749.749 0 0 1-.53.22H5v.75a.749.749 0 0 1-.22.53l-.5.5a.749.749 0 0 1-.53.22h-2A1.75 1.75 0 0 1 0 14.25v-2c0-.199.079-.389.22-.53l4.932-4.932A5.5 5.5 0 0 1 10.5 0Zm-4 5.5c-.001.431.069.86.205 1.269a.75.75 0 0 1-.181.768L1.5 12.56v1.69c0 .138.112.25.25.25h1.69l.06-.06v-1.19a.75.75 0 0 1 .75-.75h1.19l.06-.06v-1.19a.75.75 0 0 1 .75-.75h1.19l1.023-1.025a.75.75 0 0 1 .768-.18A4 4 0 1 0 6.5 5.5ZM11 6a1 1 0 1 1 0-2 1 1 0 0 1 0 2Z"/></svg><div class="t" style="left:319px;top:699px;font-size:14px;font-weight:400;color:#f0f6fc;letter-spacing:0.2px;line-height:20px;">Deploy keys</div>
<svg class="abs" style="left:295px;top:733px" width="16" height="16" viewBox="0 0 16 16" fill="#9198a1"><path d="M0 2.75A2.75 2.75 0 0 1 2.75 0h10.5A2.75 2.75 0 0 1 16 2.75v10.5A2.75 2.75 0 0 1 13.25 16H2.75A2.75 2.75 0 0 1 0 13.25ZM2.75 1.5c-.69 0-1.25.56-1.25 1.25v10.5c0 .69.56 1.25 1.25 1.25h10.5c.69 0 1.25-.56 1.25-1.25V2.75c0-.69-.56-1.25-1.25-1.25Z"/><path d="M8 4a.75.75 0 0 1 .75.75V6.7l1.69-.975a.75.75 0 0 1 .75 1.3L9.5 8l1.69.976a.75.75 0 0 1-.75 1.298L8.75 9.3v1.951a.75.75 0 0 1-1.5 0V9.299l-1.69.976a.75.75 0 0 1-.75-1.3L6.5 8l-1.69-.975a.75.75 0 0 1 .75-1.3l1.69.976V4.75A.75.75 0 0 1 8 4Z"/></svg><div class="t" style="left:319px;top:731px;font-size:14px;font-weight:700;color:#f0f6fc;letter-spacing:-0.14px;line-height:20px;">Secrets and variables</div><svg class="abs" style="left:559px;top:733px" width="16" height="16" viewBox="0 0 16 16" fill="#9198a1"><path d="M3.22 10.53a.749.749 0 0 1 0-1.06l4.25-4.25a.749.749 0 0 1 1.06 0l4.25 4.25a.749.749 0 0 1-.326 1.275.749.749 0 0 1-.734-.215L8 6.81 4.28 10.53a.751.751 0 0 1-1.042-.018.751.751 0 0 1-.018-1.042Z"/></svg>
<div class="box" style="left:287px;top:757px;width:296px;height:32px;background:#1f232a;border-radius:6px"></div>
<div class="box" style="left:279px;top:761px;width:4px;height:24px;background:#1f6feb;border-radius:2px"></div>
<div class="t" style="left:319px;top:763px;font-size:12.5px;font-weight:400;color:#f0f6fc;letter-spacing:0.2px;line-height:20px;">Actions</div>
<div class="t" style="left:319px;top:795px;font-size:12.5px;font-weight:400;color:#f0f6fc;letter-spacing:0.2px;line-height:20px;">Codespaces</div>
<div class="t" style="left:319px;top:827px;font-size:12.5px;font-weight:400;color:#f0f6fc;letter-spacing:0.2px;line-height:20px;">Dependabot</div>

<div class="t" style="left:607px;top:137px;font-size:24px;font-weight:400;color:#f0f6fc;letter-spacing:-0.43px;line-height:30px;">Actions secrets and variables</div>
<div class="box" style="left:607px;top:177px;width:768px;height:1px;background:#3d444d"></div>
<div class="t" style="left:607px;top:194.5px;font-size:14px;letter-spacing:0.2px;line-height:21px;letter-spacing:0.2px">Secrets and variables allow you to manage reusable configuration data. Secrets are <b>encrypted</b> and are used for</div>
<div class="t" style="left:607px;top:215.5px;font-size:14px;letter-spacing:0.2px;line-height:21px;letter-spacing:0.2px">sensitive data. <span class="link">Learn more about encrypted secrets</span>. Variables are shown as plain text and are used for <b>non-sensitive</b></div>
<div class="t" style="left:607px;top:236.5px;font-size:14px;letter-spacing:0.2px;line-height:21px;letter-spacing:0.2px">data. <span class="link">Learn more about variables</span>.</div>
<div class="t" style="left:607px;top:267.5px;font-size:14px;letter-spacing:0.2px;line-height:21px;letter-spacing:0.26px">Anyone with collaborator access to this repository can use these secrets and variables for actions. They are not</div>
<div class="t" style="left:607px;top:288.5px;font-size:14px;letter-spacing:0.2px;line-height:21px;letter-spacing:0.29px">passed to workflows that are triggered by a pull request from a fork.</div>
<div class="box" style="left:607px;top:374px;width:768px;height:1px;background:#3d444d"></div>
<div class="box" style="left:607px;top:335px;width:83px;height:40px;border:1px solid #3d444d;border-bottom:none;border-radius:6px 6px 0 0;background:#0d1117"></div>
<div class="t" style="left:624px;top:346px;font-size:14px;font-weight:400;color:#f0f6fc;letter-spacing:0.1px;line-height:20px;">Secrets</div>
<div class="t" style="left:707px;top:346px;font-size:14px;font-weight:400;color:#9198a1;letter-spacing:0.1px;line-height:20px;">Variables</div>
<div class="t" style="left:607px;top:394px;font-size:16px;font-weight:700;color:#f0f6fc;letter-spacing:-0.1px;line-height:20px;">Environment secrets</div>
<div class="box" style="left:607px;top:423px;width:768px;height:127px;border:1px solid #3d444d;border-radius:6px"></div>
<div class="t" style="left:885px;top:457px;font-size:14px;font-weight:400;color:#9198a1;letter-spacing:0.2px;line-height:20px;">This environment has no secrets.</div>
<div class="box" style="left:882px;top:485px;width:218px;height:32px;border:1px solid #3d444d;border-radius:6px;background:#212830"></div>
<div class="t" style="left:896px;top:491px;font-size:14px;font-weight:700;color:#f0f6fc;letter-spacing:-0.1px;line-height:20px;">Manage environment secrets</div>
<div class="t" style="left:607px;top:589px;font-size:16px;font-weight:700;color:#f0f6fc;letter-spacing:-0.1px;line-height:20px;">Repository secrets</div>
<div class="box" style="left:1203px;top:582px;width:172px;height:32px;background:#238636;border-radius:6px;border:1px solid rgba(240,246,252,0.1)"></div>
<div class="t" style="left:1216px;top:588px;font-size:14px;font-weight:700;color:#ffffff;letter-spacing:-0.05px;line-height:20px;">New repository secret</div>

<div class="box" style="left:607px;top:622px;width:768px;height:234px;border:1px solid #3d444d;border-radius:6px;overflow:hidden"><div style="height:37px;background:#151b23;border-bottom:1px solid #3d444d"></div></div>
<div class="t" style="left:624.5px;top:631px;font-size:12px;font-weight:700;color:#f0f6fc;letter-spacing:0.3px;line-height:20px;">Name</div>
<svg class="abs" style="left:660px;top:630px" width="26" height="20" viewBox="660 630 26 20" fill="none" stroke="#f0f6fc" stroke-width="1.25" stroke-linecap="round"><path d="M666.2 637.2h3.6M666.2 641.3h5.6M666.2 645.4h9.3M678.8 646.6v-10.6M676.3 638.4l2.5-2.6 2.5 2.6"/></svg>
<div class="t" style="left:1188px;top:631px;font-size:12px;font-weight:700;color:#9198a1;letter-spacing:0.25px;line-height:20px;">Last updated</div>
<svg class="abs" style="left:624px;top:675px" width="16" height="16" viewBox="0 0 16 16" fill="#f0f6fc"><path d="M4 4a4 4 0 0 1 8 0v2h.25c.966 0 1.75.784 1.75 1.75v5.5A1.75 1.75 0 0 1 12.25 15h-8.5A1.75 1.75 0 0 1 2 13.25v-5.5C2 6.784 2.784 6 3.75 6H4Zm8.25 3.5h-8.5a.25.25 0 0 0-.25.25v5.5c0 .138.112.25.25.25h8.5a.25.25 0 0 0 .25-.25v-5.5a.25.25 0 0 0-.25-.25ZM10.5 6V4a2.5 2.5 0 1 0-5 0v2Z"/></svg>
<div class="t mono" style="left:648px;top:675px;font-size:13.5px;letter-spacing:-0.95px;line-height:20px;color:#f0f6fc;-webkit-text-stroke:0.25px #f0f6fc">VERCEL_ORG_ID</div>
<div class="t" style="right:293px;top:673.7px;font-size:12px;line-height:20px;color:#f0f6fc;letter-spacing:0.3px">yesterday</div>
<svg class="abs" style="left:1298px;top:676px" width="16" height="16" viewBox="0 0 16 16" fill="#9198a1"><path d="M11.013 1.427a1.75 1.75 0 0 1 2.474 0l1.086 1.086a1.75 1.75 0 0 1 0 2.474l-8.61 8.61c-.21.21-.47.364-.756.445l-3.251.93a.75.75 0 0 1-.927-.928l.929-3.25c.081-.286.235-.547.445-.758l8.61-8.61Zm.176 4.823L9.75 4.81l-6.286 6.287a.253.253 0 0 0-.064.108l-.558 1.953 1.953-.558a.253.253 0 0 0 .108-.064Zm1.238-3.763a.25.25 0 0 0-.354 0L10.811 3.75l1.439 1.44 1.263-1.263a.25.25 0 0 0 0-.354Z"/></svg>
<svg class="abs" style="left:1334px;top:676px" width="16" height="16" viewBox="0 0 16 16" fill="#9198a1"><path d="M11 1.75V3h2.25a.75.75 0 0 1 0 1.5H2.75a.75.75 0 0 1 0-1.5H5V1.75C5 .784 5.784 0 6.75 0h2.5C10.216 0 11 .784 11 1.75ZM4.496 6.675l.66 6.6a.25.25 0 0 0 .249.225h5.19a.25.25 0 0 0 .249-.225l.66-6.6a.75.75 0 0 1 1.492.149l-.66 6.6A1.748 1.748 0 0 1 10.595 15h-5.19a1.75 1.75 0 0 1-1.741-1.575l-.66-6.6a.75.75 0 1 1 1.492-.15ZM6.5 1.75V3h3V1.75a.25.25 0 0 0-.25-.25h-2.5a.25.25 0 0 0-.25.25Z"/></svg>
<div class="box" style="left:607px;top:708px;width:768px;height:1px;background:#3d444d"></div>
<svg class="abs" style="left:624px;top:724px" width="16" height="16" viewBox="0 0 16 16" fill="#f0f6fc"><path d="M4 4a4 4 0 0 1 8 0v2h.25c.966 0 1.75.784 1.75 1.75v5.5A1.75 1.75 0 0 1 12.25 15h-8.5A1.75 1.75 0 0 1 2 13.25v-5.5C2 6.784 2.784 6 3.75 6H4Zm8.25 3.5h-8.5a.25.25 0 0 0-.25.25v5.5c0 .138.112.25.25.25h8.5a.25.25 0 0 0 .25-.25v-5.5a.25.25 0 0 0-.25-.25ZM10.5 6V4a2.5 2.5 0 1 0-5 0v2Z"/></svg>
<div class="t mono" style="left:648px;top:724px;font-size:13.5px;letter-spacing:-0.95px;line-height:20px;color:#f0f6fc;-webkit-text-stroke:0.25px #f0f6fc">VERCEL_PROJECT_ID</div>
<div class="t" style="right:293px;top:722.7px;font-size:12px;line-height:20px;color:#f0f6fc;letter-spacing:0.3px">2 days ago</div>
<svg class="abs" style="left:1298px;top:725px" width="16" height="16" viewBox="0 0 16 16" fill="#9198a1"><path d="M11.013 1.427a1.75 1.75 0 0 1 2.474 0l1.086 1.086a1.75 1.75 0 0 1 0 2.474l-8.61 8.61c-.21.21-.47.364-.756.445l-3.251.93a.75.75 0 0 1-.927-.928l.929-3.25c.081-.286.235-.547.445-.758l8.61-8.61Zm.176 4.823L9.75 4.81l-6.286 6.287a.253.253 0 0 0-.064.108l-.558 1.953 1.953-.558a.253.253 0 0 0 .108-.064Zm1.238-3.763a.25.25 0 0 0-.354 0L10.811 3.75l1.439 1.44 1.263-1.263a.25.25 0 0 0 0-.354Z"/></svg>
<svg class="abs" style="left:1334px;top:725px" width="16" height="16" viewBox="0 0 16 16" fill="#9198a1"><path d="M11 1.75V3h2.25a.75.75 0 0 1 0 1.5H2.75a.75.75 0 0 1 0-1.5H5V1.75C5 .784 5.784 0 6.75 0h2.5C10.216 0 11 .784 11 1.75ZM4.496 6.675l.66 6.6a.25.25 0 0 0 .249.225h5.19a.25.25 0 0 0 .249-.225l.66-6.6a.75.75 0 0 1 1.492.149l-.66 6.6A1.748 1.748 0 0 1 10.595 15h-5.19a1.75 1.75 0 0 1-1.741-1.575l-.66-6.6a.75.75 0 1 1 1.492-.15ZM6.5 1.75V3h3V1.75a.25.25 0 0 0-.25-.25h-2.5a.25.25 0 0 0-.25.25Z"/></svg>
<div class="box" style="left:607px;top:757px;width:768px;height:1px;background:#3d444d"></div>
<svg class="abs" style="left:624px;top:773px" width="16" height="16" viewBox="0 0 16 16" fill="#f0f6fc"><path d="M4 4a4 4 0 0 1 8 0v2h.25c.966 0 1.75.784 1.75 1.75v5.5A1.75 1.75 0 0 1 12.25 15h-8.5A1.75 1.75 0 0 1 2 13.25v-5.5C2 6.784 2.784 6 3.75 6H4Zm8.25 3.5h-8.5a.25.25 0 0 0-.25.25v5.5c0 .138.112.25.25.25h8.5a.25.25 0 0 0 .25-.25v-5.5a.25.25 0 0 0-.25-.25ZM10.5 6V4a2.5 2.5 0 1 0-5 0v2Z"/></svg>
<div class="t mono" style="left:648px;top:773px;font-size:13.5px;letter-spacing:-0.95px;line-height:20px;color:#f0f6fc;-webkit-text-stroke:0.25px #f0f6fc">VERCEL_TOKEN</div>
<div class="t" style="right:293px;top:771.7px;font-size:12px;line-height:20px;color:#f0f6fc;letter-spacing:0.3px">2 days ago</div>
<svg class="abs" style="left:1298px;top:774px" width="16" height="16" viewBox="0 0 16 16" fill="#9198a1"><path d="M11.013 1.427a1.75 1.75 0 0 1 2.474 0l1.086 1.086a1.75 1.75 0 0 1 0 2.474l-8.61 8.61c-.21.21-.47.364-.756.445l-3.251.93a.75.75 0 0 1-.927-.928l.929-3.25c.081-.286.235-.547.445-.758l8.61-8.61Zm.176 4.823L9.75 4.81l-6.286 6.287a.253.253 0 0 0-.064.108l-.558 1.953 1.953-.558a.253.253 0 0 0 .108-.064Zm1.238-3.763a.25.25 0 0 0-.354 0L10.811 3.75l1.439 1.44 1.263-1.263a.25.25 0 0 0 0-.354Z"/></svg>
<svg class="abs" style="left:1334px;top:774px" width="16" height="16" viewBox="0 0 16 16" fill="#9198a1"><path d="M11 1.75V3h2.25a.75.75 0 0 1 0 1.5H2.75a.75.75 0 0 1 0-1.5H5V1.75C5 .784 5.784 0 6.75 0h2.5C10.216 0 11 .784 11 1.75ZM4.496 6.675l.66 6.6a.25.25 0 0 0 .249.225h5.19a.25.25 0 0 0 .249-.225l.66-6.6a.75.75 0 0 1 1.492.149l-.66 6.6A1.748 1.748 0 0 1 10.595 15h-5.19a1.75 1.75 0 0 1-1.741-1.575l-.66-6.6a.75.75 0 1 1 1.492-.15ZM6.5 1.75V3h3V1.75a.25.25 0 0 0-.25-.25h-2.5a.25.25 0 0 0-.25.25Z"/></svg>
<div class="box" style="left:607px;top:806px;width:768px;height:1px;background:#3d444d"></div>
<svg class="abs" style="left:624px;top:822px" width="16" height="16" viewBox="0 0 16 16" fill="#f0f6fc"><path d="M4 4a4 4 0 0 1 8 0v2h.25c.966 0 1.75.784 1.75 1.75v5.5A1.75 1.75 0 0 1 12.25 15h-8.5A1.75 1.75 0 0 1 2 13.25v-5.5C2 6.784 2.784 6 3.75 6H4Zm8.25 3.5h-8.5a.25.25 0 0 0-.25.25v5.5c0 .138.112.25.25.25h8.5a.25.25 0 0 0 .25-.25v-5.5a.25.25 0 0 0-.25-.25ZM10.5 6V4a2.5 2.5 0 1 0-5 0v2Z"/></svg>
<div class="t mono" style="left:648px;top:822px;font-size:13.5px;letter-spacing:-0.95px;line-height:20px;color:#f0f6fc;-webkit-text-stroke:0.25px #f0f6fc">VERCEL_URL</div>
<div class="t" style="right:293px;top:820.7px;font-size:12px;line-height:20px;color:#f0f6fc;letter-spacing:0.3px">yesterday</div>
<svg class="abs" style="left:1298px;top:823px" width="16" height="16" viewBox="0 0 16 16" fill="#9198a1"><path d="M11.013 1.427a1.75 1.75 0 0 1 2.474 0l1.086 1.086a1.75 1.75 0 0 1 0 2.474l-8.61 8.61c-.21.21-.47.364-.756.445l-3.251.93a.75.75 0 0 1-.927-.928l.929-3.25c.081-.286.235-.547.445-.758l8.61-8.61Zm.176 4.823L9.75 4.81l-6.286 6.287a.253.253 0 0 0-.064.108l-.558 1.953 1.953-.558a.253.253 0 0 0 .108-.064Zm1.238-3.763a.25.25 0 0 0-.354 0L10.811 3.75l1.439 1.44 1.263-1.263a.25.25 0 0 0 0-.354Z"/></svg>
<svg class="abs" style="left:1334px;top:823px" width="16" height="16" viewBox="0 0 16 16" fill="#9198a1"><path d="M11 1.75V3h2.25a.75.75 0 0 1 0 1.5H2.75a.75.75 0 0 1 0-1.5H5V1.75C5 .784 5.784 0 6.75 0h2.5C10.216 0 11 .784 11 1.75ZM4.496 6.675l.66 6.6a.25.25 0 0 0 .249.225h5.19a.25.25 0 0 0 .249-.225l.66-6.6a.75.75 0 0 1 1.492.149l-.66 6.6A1.748 1.748 0 0 1 10.595 15h-5.19a1.75 1.75 0 0 1-1.741-1.575l-.66-6.6a.75.75 0 1 1 1.492-.15ZM6.5 1.75V3h3V1.75a.25.25 0 0 0-.25-.25h-2.5a.25.25 0 0 0-.25.25Z"/></svg>
<svg class="abs" style="left:0;top:0" width="1559" height="857" viewBox="0 0 1559 857"><polygon points="303.3,39 318.1,31.5 318.1,46.5" fill="#fd2a04"/><rect x="317.6" y="37.8" width="66.59999999999998" height="3.1" fill="#fd2a04"/><polygon points="821.2,86.9 836.0,79.4 836.0,94.4" fill="#fd2a04"/><rect x="835.5" y="85.7" width="66.49999999999996" height="3.1" fill="#fd2a04"/><polygon points="388.3,773.1 403.1,765.6 403.1,780.6" fill="#fd2a04"/><rect x="402.6" y="771.9" width="66.59999999999998" height="3.1" fill="#fd2a04"/><polygon points="1383.3,597.1 1398.1,589.6 1398.1,604.6" fill="#fd2a04"/><rect x="1397.6" y="595.9" width="66.6000000000001" height="3.1" fill="#fd2a04"/></svg>
</body></html>
